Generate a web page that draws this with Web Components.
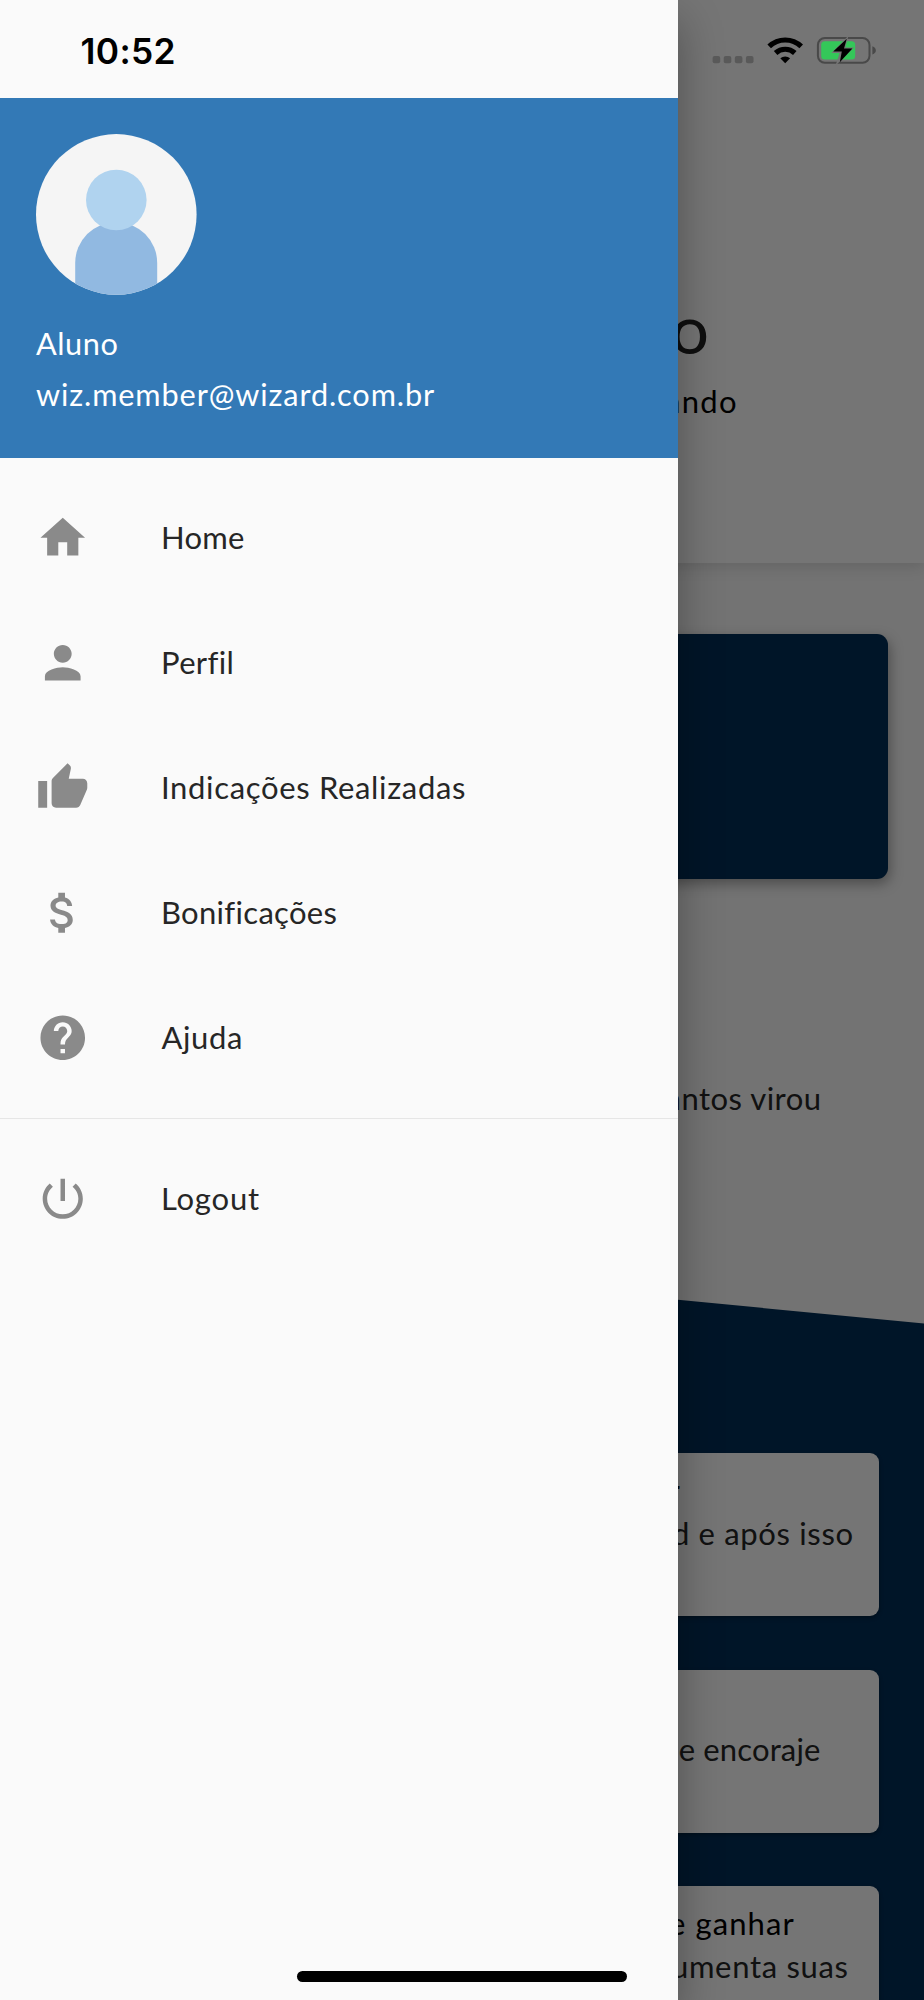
<!DOCTYPE html>
<html lang="pt-BR">
<head>
<meta charset="utf-8">
<title>Wizard</title>
<style>
  body { margin: 0; width: 924px; height: 2000px; overflow: hidden; font-family: Lato, "Open Sans", sans-serif; font-size: 31px; color: #262626; }
</style>
</head>
<body>
<wz-screen>
  <wz-page slot="page"></wz-page>
  <wz-drawer slot="drawer">
    <wz-account slot="header" name="Aluno" name-width="81.5" email="wiz.member@wizard.com.br" email-width="398"></wz-account>
    <wz-item icon="home" width="81">Home</wz-item>
    <wz-item icon="person" width="69">Perfil</wz-item>
    <wz-item icon="thumb" width="302">Indicações Realizadas</wz-item>
    <wz-item icon="money" width="173">Bonificações</wz-item>
    <wz-item icon="help" width="79.5" inset="161.5">Ajuda</wz-item>
    <wz-divider></wz-divider>
    <wz-item icon="power" width="96">Logout</wz-item>
  </wz-drawer>
  <wz-system slot="system"></wz-system>
</wz-screen>
<script>
const define = (name, html, setup) => customElements.define(name, class extends HTMLElement {
  connectedCallback() {
    if (this.shadowRoot) return;
    const t = document.createElement('template');
    t.innerHTML = html;
    this.attachShadow({ mode: 'open' }).append(t.content.cloneNode(true));
    if (setup) setup(this, this.shadowRoot);
  }
});

// One line of text: starts at the inset and is tracked to fill the given width.
const ctx = document.createElement('canvas').getContext('2d');
define('wz-text', `<style>:host{display:block;white-space:pre;line-height:42.5px;font-kerning:normal}</style><slot></slot>`, el => {
  const cs = getComputedStyle(el);
  const text = el.textContent;
  ctx.font = `${cs.fontWeight} ${cs.fontSize} ${cs.fontFamily}`;
  const m = ctx.measureText(text);
  const ink = m.actualBoundingBoxRight + m.actualBoundingBoxLeft;
  const width = +el.getAttribute('width');
  if (width && text.length > 1) el.style.letterSpacing = ((width - ink) / (text.length - 1)).toFixed(3) + 'px';
  el.style.marginLeft = (+(el.getAttribute('inset') || 0) + m.actualBoundingBoxLeft) + 'px';
});

define('wz-screen', `<style>
  :host{display:grid;width:924px;height:2000px;overflow:hidden;grid-template:2000px / 924px}
  .layer,.scrim{grid-area:1/1;min-width:0;isolation:isolate}
  .scrim{background:rgba(0,0,0,.54)}
</style>
<div class="layer"><slot name="page"></slot></div><div class="scrim"></div>
<div class="layer"><slot name="drawer"></slot></div><div class="layer"><slot name="system"></slot></div>`);

define('wz-card', `<style>
  :host{display:block;box-sizing:border-box;height:163px;padding-top:16px;border-radius:9px;background:#fff;box-shadow:0 2px 4px rgba(0,0,0,.3)}
  .title{height:42.5px;color:#000}
</style><div class="title"><slot name="title"></slot></div><slot></slot>`);

define('wz-page', `<style>
  :host{display:flex;flex-direction:column;height:2000px;overflow:hidden;background:#fafafa}
  .hero{flex:none;box-sizing:border-box;height:563px;padding-top:288px;background:#fff;box-shadow:0 4px 14px rgba(0,0,0,.13);color:#000}
  .hero .big{font-size:68px;line-height:80px;color:#212121}
  .hero .sub{margin-top:12px}
  .banner{flex:none;height:245px;margin:71px 36px 0;border-radius:11px;background:#002e57;box-shadow:2px 5px 13px rgba(0,0,0,.34)}
  .quote{flex:none;margin-top:198px;height:42px}
  .steps{flex:none;box-sizing:border-box;height:765px;margin-top:116px;padding:218px 45px 0;background:#002e57;
    clip-path:polygon(0 0,100% 88.4px,100% 100%,0 100%);display:flex;flex-direction:column;gap:53.5px}
  wz-card{flex:none}
</style>
<div class="hero"><wz-text class="big" inset="672.5">o</wz-text><div class="sub"><wz-text inset="666" width="70">ando</wz-text></div></div>
<div class="banner"></div>
<div class="quote"><wz-text inset="666.5" width="154">antos virou</wz-text></div>
<div class="steps">
  <wz-card><wz-text slot="title" inset="625.5">r</wz-text><wz-text inset="628" width="179.5">d e após isso</wz-text></wz-card>
  <wz-card><wz-text inset="634.7" width="140.3">e encoraje</wz-text></wz-card>
  <wz-card><wz-text slot="title" inset="625" width="124.5">e ganhar</wz-text><wz-text inset="628" width="174.5">umenta suas</wz-text></wz-card>
</div>`);

define('wz-drawer', `<style>
  :host{display:block;box-sizing:border-box;width:678.4px;height:2000px;padding-top:98.4px;background:#fafafa;box-shadow:0 20px 42px rgba(0,0,0,.32)}
  nav{padding-top:18px}
</style><slot name="header"></slot><nav><slot></slot></nav>`);

define('wz-account', `<style>
  :host{display:block;box-sizing:border-box;height:359.5px;padding:35.6px 36px 0;background:#3379b6;color:#fff;font-size:30.7px}
  svg{display:block;width:161px;height:161px;margin-bottom:22.8px}
  wz-text{line-height:51.6px}
</style>
<svg viewBox="0 0 161 161"><defs><clipPath id="c"><circle cx="80.3" cy="80.4" r="80.3"/></clipPath></defs>
<g clip-path="url(#c)"><rect width="161" height="161" fill="#f5f5f5"/><path d="M39.2 161V129a41 41 0 0 1 82 0v32z" fill="#91b9e1"/><circle cx="80.3" cy="66" r="30.3" fill="#b0d3ef"/></g></svg>
<div id="t"></div>`, (el, root) => {
  for (const k of ['name', 'email']) {
    const t = document.createElement('wz-text');
    t.textContent = el.getAttribute(k);
    t.setAttribute('inset', '0');
    t.setAttribute('width', el.getAttribute(k + '-width'));
    root.getElementById('t').append(t);
  }
});

const icons = {
  home: 'M10 20v-6h4v6h5v-8h3L12 3 2 12h3v8z',
  person: 'M12 12c2.21 0 4-1.79 4-4s-1.79-4-4-4-4 1.79-4 4 1.79 4 4 4zm0 2c-2.67 0-8 1.34-8 4v2h16v-2c0-2.66-5.33-4-8-4z',
  thumb: 'M1 21h4V9H1v12zm22-11c0-1.1-.9-2-2-2h-6.31l.95-4.57.03-.32c0-.41-.17-.79-.44-1.06L14.17 1 7.59 7.59C7.22 7.95 7 8.45 7 9v10c0 1.1.9 2 2 2h9c.83 0 1.54-.5 1.84-1.22l3.02-7.05c.09-.23.14-.47.14-.73v-2z',
  money: 'M11.8 10.9c-2.27-.59-3-1.2-3-2.15 0-1.09 1.01-1.85 2.7-1.85 1.78 0 2.44.85 2.5 2.1h2.21c-.07-1.72-1.12-3.3-3.21-3.81V3h-3v2.16c-1.94.42-3.5 1.68-3.5 3.61 0 2.31 1.91 3.46 4.7 4.13 2.5.6 3 1.48 3 2.41 0 .69-.49 1.79-2.7 1.79-2.06 0-2.87-.92-2.98-2.1h-2.2c.12 2.19 1.76 3.42 3.68 3.83V21h3v-2.15c1.95-.37 3.5-1.5 3.5-3.55 0-2.84-2.43-3.81-4.7-4.4z',
  help: 'M12 2C6.48 2 2 6.48 2 12s4.48 10 10 10 10-4.48 10-10S17.52 2 12 2zm1 17h-2v-2h2v2zm2.07-7.75l-.9.92C13.45 12.9 13 13.5 13 15h-2v-.5c0-1.1.45-2.1 1.17-2.83l1.24-1.26c.37-.36.59-.86.59-1.41 0-1.1-.9-2-2-2s-2 .9-2 2H8c0-2.21 1.79-4 4-4s4 1.79 4 4c0 .88-.36 1.68-.93 2.25z',
  power: 'M13 3h-2v10h2V3zm4.83 2.17l-1.42 1.42C17.99 7.86 19 9.81 19 12c0 3.87-3.13 7-7 7s-7-3.13-7-7c0-2.19 1.01-4.14 2.58-5.42L6.17 5.17C4.23 6.82 3 9.26 3 12c0 4.97 4.03 9 9 9s9-4.03 9-9c0-2.74-1.23-5.18-3.17-6.83z'
};
define('wz-item', `<style>
  :host{display:flex;align-items:center;height:125px;padding-left:35.9px}
  svg{flex:none;width:53.5px;height:53.5px;margin-bottom:1px;fill:#8a8a8a}
  .label{padding-bottom:2px}
</style><svg viewBox="0 0 24 24"><path fill-rule="evenodd"/></svg><div class="label"></div>`, (el, root) => {
  root.querySelector('path').setAttribute('d', icons[el.getAttribute('icon')]);
  const t = document.createElement('wz-text');
  t.textContent = el.textContent;
  t.setAttribute('width', el.getAttribute('width'));
  t.setAttribute('inset', +(el.getAttribute('inset') || 163) - 89.4);
  root.querySelector('.label').append(t);
});

define('wz-divider', `<style>:host{display:block;height:1.5px;margin:17px 0 17.2px;background:#e6e6e6}</style>`);

define('wz-system', `<style>
  :host{display:flex;flex-direction:column;justify-content:space-between;height:2000px;color:#000}
  .bar{display:flex;height:98px}
  .clock{flex:none;width:712px}
  .clock wz-text{font:600 35.3px/103px Inter,sans-serif}
  .home{align-self:center;width:330px;height:11px;margin-bottom:18px;border-radius:6px;background:#000}
  svg{display:block}
</style>
<div class="bar"><div class="clock"><wz-text inset="81.5" width="92">10:52</wz-text></div>
<svg width="170" height="98" viewBox="712 0 170 98">
  <g fill="#595959"><rect x="712.6" y="56" width="7.6" height="7.3" rx="2"/><rect x="723.7" y="56" width="7.6" height="7.3" rx="2"/><rect x="734.8" y="56" width="7.6" height="7.3" rx="2"/><rect x="745.9" y="56" width="7.6" height="7.3" rx="2"/></g>
  <g fill="none" stroke="#000" stroke-width="5.2"><path d="M769.2 46.4a23.2 23.2 0 0 1 32 0"/><path d="M775.6 53a14.2 14.2 0 0 1 19.2 0"/></g>
  <path d="M785.2 63.2l-4.9-4.9a7.2 7.2 0 0 1 9.8 0z"/>
  <rect x="817.9" y="37.9" width="51.6" height="24.9" rx="7" fill="none" stroke="#494949" stroke-width="2"/>
  <path d="M872.4 46.2c4.6 1.8 4.6 6.6 0 8.4z" fill="#494949"/>
  <rect x="821.2" y="41.2" width="34" height="18.4" rx="3.6" fill="#34c759"/>
  <path d="M848.4 35.8l-17 17.2h8.2l-4 12.4 18.4-18h-8.8z" fill="#757575"/>
  <path d="M846.8 38.8l-13.6 12.8h8.6l-2 10.6 12.6-13.6h-8.4z" fill="#000"/>
</svg></div>
<div class="home"></div>`);
</script>
</body>
</html>
